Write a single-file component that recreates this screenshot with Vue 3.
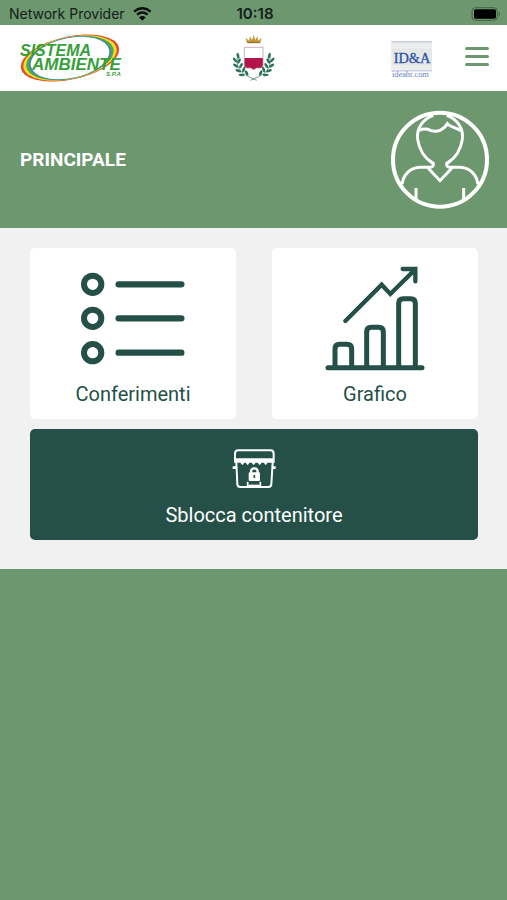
<template>
  <div class="app">
    <!-- Device status bar -->
    <div class="status-bar">
      <div class="carrier">
        <span>Network Provider</span>
        <svg class="wifi" viewBox="0 0 57 42" aria-hidden="true">
          <path d="M3 14 Q28 -7 53 14" />
          <path d="M12 23 Q28 10 44 23" />
          <path class="wifi-dot" d="M28 41 L18 31 Q28 23 38 31 Z" />
        </svg>
      </div>
      <span class="clock">10:18</span>
      <svg class="battery" viewBox="0 0 90 42" aria-hidden="true">
        <rect class="battery-case" x="3" y="2" width="76" height="38" rx="11" />
        <rect x="9" y="7" width="66" height="28" rx="5" />
        <path class="battery-tip" d="M83 13 Q90 21 83 29 Z" />
      </svg>
    </div>

    <header class="header">
      <a class="brand" href="#" aria-label="Sistema Ambiente">
        <svg class="brand-logo" viewBox="18 32 106 52">
          <g transform="rotate(-12 70 58)">
            <ellipse cx="70" cy="58" rx="50" ry="21.5" fill="#e04a2d" />
            <ellipse cx="70" cy="58" rx="47.5" ry="21" fill="#f3dc2c" />
            <ellipse cx="70" cy="58" rx="44.5" ry="20.7" fill="#4fae3c" />
            <ellipse cx="70" cy="58" rx="42" ry="20.4" fill="#3f86b5" />
            <ellipse cx="70" cy="58" rx="40" ry="20" fill="#ffffff" />
          </g>
          <text x="20" y="56" font-size="16">SISTEMA</text>
          <text x="32" y="70" font-size="17">AMBIENTE</text>
          <text x="106" y="76" font-size="6">S.P.A</text>
        </svg>
      </a>

      <!-- Municipal coat of arms -->
      <svg class="crest" viewBox="63 102 132 144" aria-hidden="true">
        <path d="M108 130 L104 113 L114 122 L117 109 L123 120 L128 105 L133 120 L139 109 L142 122 L152 113 L148 130 Z" fill="#c39a3c" />
        <path d="M110 127 H146" stroke="#8c6a22" stroke-width="3" />
        <path d="M100 142 H156 V196 Q156 203 149 204 H137 L128 209 L119 204 H107 Q100 203 100 196 Z" fill="#ffffff" />
        <path d="M100 174 H156 V196 Q156 203 149 204 H137 L128 209 L119 204 H107 Q100 203 100 196 Z" fill="#b3154b" />
        <path d="M100 142 H156 V196 Q156 203 149 204 H137 L128 209 L119 204 H107 Q100 203 100 196 Z" fill="none" stroke="#b58d98" stroke-width="2" />
        <g v-for="side in ['', 'translate(256 0) scale(-1 1)']" :key="side" :transform="side">
          <path d="M80 163 Q68 212 115 231 L137 241" fill="none" stroke="#2c7159" stroke-width="2" />
          <g fill="#2c7159">
            <ellipse
              v-for="leaf in leaves"
              :key="leaf.x + '-' + leaf.y"
              :cx="leaf.x"
              :cy="leaf.y"
              rx="9"
              ry="4"
              :transform="`rotate(${leaf.turn} ${leaf.x} ${leaf.y})`"
            />
          </g>
        </g>
      </svg>

      <div class="header-actions">
        <svg class="partner" viewBox="60 114 129 117">
          <rect x="64" y="120" width="122" height="90" fill="#e6e8e7" />
          <path d="M64 122 H186 M64 210 H186" stroke="#a9b4dc" stroke-width="2" />
          <path d="M66 132 H184 M66 140 H184 M66 196 H184 M66 203 H184" stroke="#f5f5f4" stroke-width="3" />
          <text class="partner-name" x="71" y="186" font-size="43">ID&amp;A</text>
          <text class="partner-url" x="66" y="228" font-size="25">ideahr.com</text>
        </svg>
        <button class="menu-btn" type="button" aria-label="Menu">
          <span></span>
          <span></span>
          <span></span>
        </button>
      </div>
    </header>

    <section class="hero">
      <h1>PRINCIPALE</h1>
      <svg class="avatar" viewBox="60 45 300 300" aria-hidden="true">
        <circle class="avatar-ring" cx="210" cy="194" r="141" />
        <path d="M190 61 C156 73 139 102 143 133 C147 162 164 190 190 205 Q191 217 178 217 H150 C122 218 100 238 96 268" />
        <path d="M230 61 C264 73 281 102 277 133 C273 162 256 190 230 205 Q229 217 242 217 H270 C298 218 320 238 324 268" />
        <path d="M147 106 C160 101 171 101 181 106 C203 114 223 103 232 86 C240 96 257 97 275 108" />
        <path d="M174 219 L210 257 L246 219" />
        <path d="M138 279 V318 M281 279 V318" />
      </svg>
    </section>

    <main class="content">
      <div class="cards">
        <button class="card" type="button">
          <svg class="card-icon" viewBox="180 75 318 318" aria-hidden="true">
            <template v-for="y in [133, 235, 338]" :key="y">
              <circle cx="218" :cy="y" r="26" stroke-width="18" />
              <path :d="`M296 ${y} H484`" stroke-width="19" />
            </template>
          </svg>
          <span>Conferimenti</span>
        </button>
        <button class="card" type="button">
          <svg class="card-icon" viewBox="186 75 318 318" aria-hidden="true">
            <g stroke-width="15">
              <path d="M204 383 H486" />
              <path d="M225 380 V327 Q225 313 239 313 H261 Q275 313 275 327 V380" />
              <path d="M320 380 V276 Q320 262 334 262 H356 Q370 262 370 276 V380" />
              <path d="M416 380 V190 Q416 176 430 176 H452 Q466 176 466 190 V380" />
            </g>
            <path d="M256 243 L365 134 L391 162 L465 89 M428 87 H466 V124" stroke-width="13" />
          </svg>
          <span>Grafico</span>
        </button>
      </div>

      <button class="card unlock" type="button">
        <svg class="bin-icon" viewBox="274 70 138 126" aria-hidden="true">
          <path d="M286 111 V87 Q286 77 296 77 H392 Q402 77 402 87 V111 Z" />
          <path d="M288 105 H401" stroke-width="8" />
          <path d="M290 113 L293 179 Q294 187 302 187 H386 Q394 187 395 179 L399 113" />
          <path d="M279 129 H290 M398 129 H408" stroke-width="8" />
          <path class="bin-trim" d="M302 112 q6 18 12 0 z m16 0 q6 18 12 0 z m18 0 q6 18 12 0 z m18 0 q6 18 12 0 z m18 0 q6 18 12 0 z" />
          <path d="M324 187 V171 M362 187 V171" stroke-width="5" />
          <path d="M326 182 H360" stroke-width="4" />
          <path d="M334 147 V141 Q334 131 344 131 Q354 131 354 141 V147" stroke-width="7" />
          <rect class="bin-lock" x="327" y="143" width="34" height="26" rx="4" />
          <path class="bin-key" d="M344 151 V160" />
        </svg>
        <span>Sblocca contenitore</span>
      </button>
    </main>
  </div>
</template>

<script setup>
// left branch of the wreath, the right one is mirrored
const leaves = [
  { x: 81, y: 167, turn: 75 },
  { x: 72, y: 180, turn: 50 },
  { x: 84, y: 183, turn: -60 },
  { x: 74, y: 197, turn: 35 },
  { x: 90, y: 197, turn: -60 },
  { x: 82, y: 212, turn: 20 },
  { x: 98, y: 209, turn: -70 },
  { x: 92, y: 225, turn: 5 },
  { x: 107, y: 219, turn: 60 },
]
</script>

<style>
body {
  margin: 0;
  background: #6d976e;
}
</style>

<style scoped>
.app {
  min-height: 100vh;
  background: #6d976e;
  font-family: Roboto, 'Liberation Sans', sans-serif;
}

svg {
  display: block;
}

/* --- Status bar --- */
.status-bar {
  display: grid;
  grid-template-columns: 1fr auto 1fr;
  align-items: center;
  height: 25px;
  padding: 2px 6px 0 9px;
  box-sizing: border-box;
  font-family: Inter, sans-serif;
  font-size: 14px;
  color: #14201a;
}

.carrier {
  display: flex;
  align-items: center;
  gap: 8px;
  white-space: nowrap;
}

.wifi {
  width: 19px;
  height: 14px;
  fill: none;
  stroke: #0b0f0c;
  stroke-width: 7;
}

.wifi .wifi-dot {
  fill: #0b0f0c;
  stroke: none;
}

.clock {
  font-size: 15px;
  font-weight: 600;
}

.battery {
  justify-self: end;
  width: 30px;
  height: 14px;
}

.battery-case {
  fill: none;
  stroke: #41604a;
  stroke-width: 3;
}

.battery-tip {
  fill: #41604a;
}

/* --- Header --- */
.header {
  display: grid;
  grid-template-columns: 1fr auto 1fr;
  align-items: center;
  height: 66px;
  padding: 0 18px;
  background: #ffffff;
}

.brand-logo {
  width: 106px;
  height: 52px;
  fill: #36a03a;
  font-family: 'Liberation Sans', sans-serif;
  font-weight: 700;
  font-style: italic;
}

.crest {
  width: 44px;
  height: 48px;
}

.header-actions {
  display: flex;
  justify-content: flex-end;
  align-items: center;
  gap: 32px;
}

.partner {
  width: 43px;
  height: 39px;
  font-family: 'Liberation Serif', serif;
}

.partner-name {
  fill: #2c54a8;
  stroke: #2c54a8;
  stroke-width: 1;
}

.partner-url {
  fill: #6480c4;
}

.menu-btn {
  display: flex;
  flex-direction: column;
  gap: 5px;
  width: 24px;
  padding: 0 0 3px;
  border: none;
  background: none;
  cursor: pointer;
}

.menu-btn span {
  width: 100%;
  height: 3px;
  border-radius: 2px;
  background: #6d976e;
}

/* --- Title band --- */
.hero {
  display: flex;
  justify-content: space-between;
  align-items: center;
  height: 137px;
  padding: 0 17px 0 20px;
}

.hero h1 {
  margin: 0;
  font-size: 19px;
  font-weight: 700;
  line-height: 24px;
  color: #ffffff;
}

.avatar {
  width: 100px;
  height: 100px;
  fill: none;
  stroke: #ffffff;
  stroke-width: 9;
}

.avatar-ring {
  stroke-width: 12;
}

/* --- Cards --- */
.content {
  display: flex;
  flex-direction: column;
  gap: 10px;
  padding: 20px 29px 29px 30px;
  background: #f1f1f1;
}

.cards {
  display: grid;
  grid-template-columns: 1fr 1fr;
  gap: 36px;
}

.card {
  display: flex;
  flex-direction: column;
  align-items: center;
  gap: 11px;
  padding: 17px 0 13px;
  border: none;
  border-radius: 5px;
  background: #ffffff;
  color: #245047;
  font-family: inherit;
  font-size: 20px;
  line-height: 24px;
  cursor: pointer;
}

.card-icon {
  width: 106px;
  height: 106px;
  fill: none;
  stroke: #245047;
  stroke-linecap: round;
}

.unlock {
  gap: 13px;
  padding-top: 19px;
  background: #245047;
  color: #ffffff;
}

.bin-icon {
  width: 46px;
  height: 42px;
  fill: none;
  stroke: #ffffff;
  stroke-width: 6;
}

.bin-lock,
.bin-trim {
  fill: #ffffff;
  stroke: none;
}

.bin-key {
  stroke: #245047;
  stroke-width: 5;
}
</style>
